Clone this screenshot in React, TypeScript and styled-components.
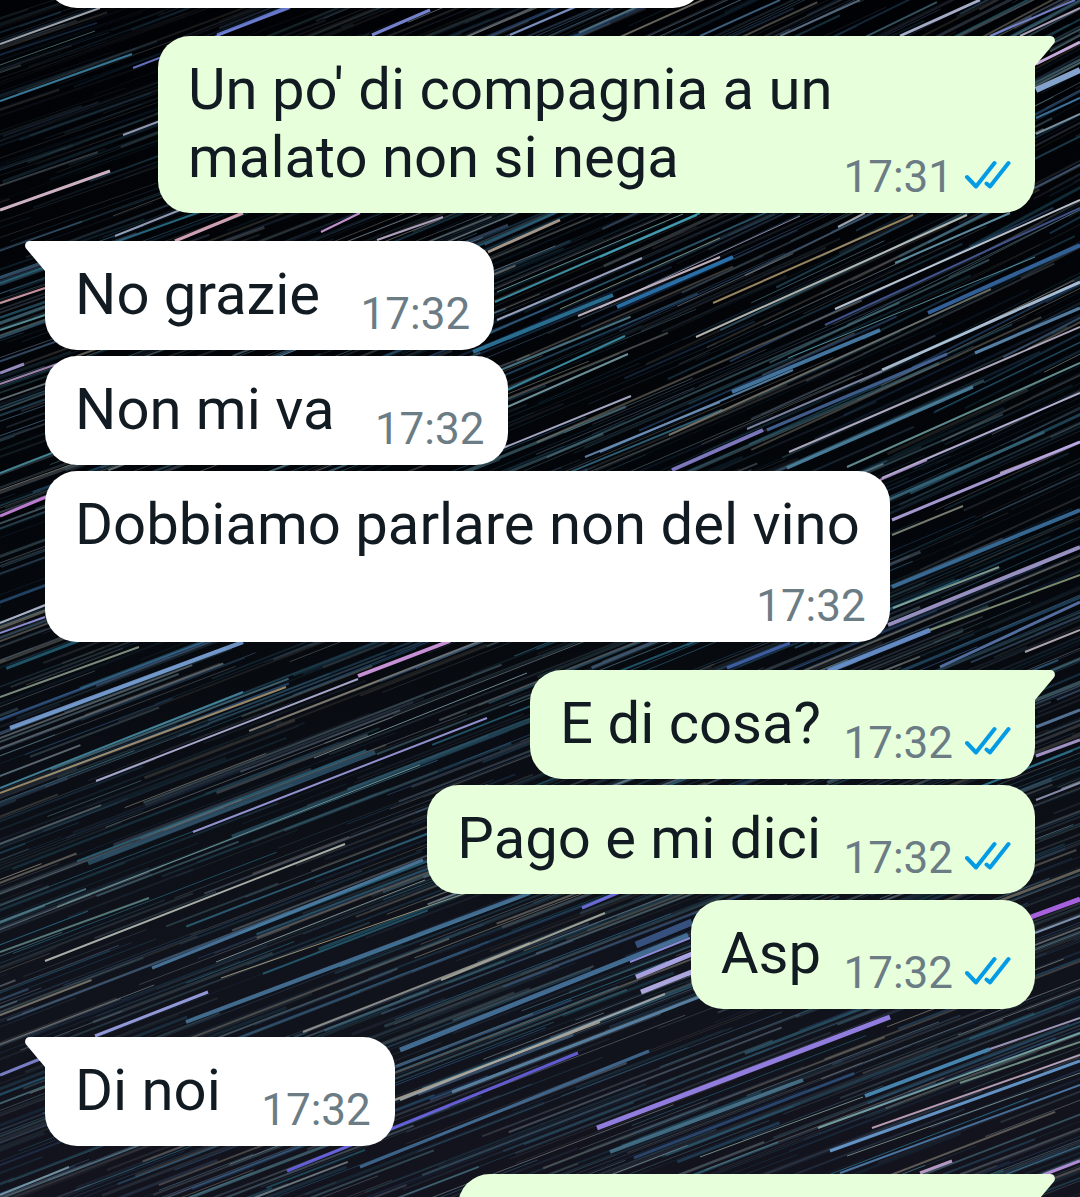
import React from "react";
import styled, { createGlobalStyle, css } from "styled-components";

const colors = {
  incoming: "#ffffff",
  outgoing: "#e7ffdb",
  text: "#111b21",
  meta: "#6b7c85",
  read: "#039be5",
};

const GlobalStyle = createGlobalStyle`
  *, *::before, *::after { box-sizing: border-box; }
  body {
    margin: 0;
    background: #05080d;
    font-family: Roboto, "Noto Sans", sans-serif;
  }
`;

type Side = "in" | "out";

const Screen = styled.main`
  position: relative;
  height: 100vh;
  overflow: hidden;
`;

const Wallpaper = styled.svg`
  position: absolute;
  inset: 0;
  width: 100%;
  height: 100%;
`;

const Thread = styled.div`
  position: relative;
  display: flex;
  flex-direction: column;
  gap: 28px;
  padding: 0 45px;
`;

const Group = styled.section<{ $side: Side }>`
  display: flex;
  flex-direction: column;
  align-items: ${(p) => (p.$side === "in" ? "flex-start" : "flex-end")};
  gap: 6px;
`;

const Bubble = styled.article<{ $side: Side; $tail?: boolean }>`
  position: relative;
  display: grid;
  max-width: calc(100% - 113px);
  padding: 19px 24px 10px 30px;
  border-radius: 32px;
  background: ${(p) => (p.$side === "in" ? colors.incoming : colors.outgoing)};
  ${(p) =>
    p.$tail &&
    (p.$side === "in"
      ? css`border-top-left-radius: 0;`
      : css`border-top-right-radius: 0;`)}
`;

const ClippedTop = styled(Bubble)`
  width: 660px;
  height: 8px;
  padding: 0;
  border-radius: 0;
  overflow: hidden;
  background: none;

  &::before {
    content: "";
    height: 80px;
    margin-top: -72px;
    border-radius: 32px;
    background: ${colors.incoming};
  }
`;

const ClippedBottom = styled(Bubble)`
  width: 577px;
  height: 109px;
`;

const TailShape = styled.svg<{ $side: Side }>`
  position: absolute;
  top: 0;
  ${(p) => (p.$side === "in" ? "left: -20px;" : "right: -20px;")}
  ${(p) => p.$side === "in" && "transform: scaleX(-1);"}
  width: 21px;
  height: 32px;
  fill: ${(p) => (p.$side === "in" ? colors.incoming : colors.outgoing)};
`;

const Text = styled.p<{ $stacked?: boolean }>`
  grid-area: 1 / 1;
  margin: 0 6px ${(p) => (p.$stacked ? 10 : 12)}px 0;
  color: ${colors.text};
  font-size: 58px;
  line-height: 68px;
`;

const MetaSpace = styled.span<{ $side: Side }>`
  display: inline-block;
  width: ${(p) => (p.$side === "in" ? 144 : 184)}px;
`;

const Meta = styled.div<{ $stacked?: boolean }>`
  grid-area: ${(p) => (p.$stacked ? "2 / 1" : "1 / 1")};
  ${(p) => p.$stacked && "margin-top: 12px;"}
  place-self: end;
  display: flex;
  align-items: center;
  gap: 12px;
  color: ${colors.meta};
  font-size: 44px;
  line-height: 52px;
`;

const Ticks = styled.svg`
  width: 46px;
  height: 30px;
  margin-bottom: 4px;
  fill: none;
  stroke: ${colors.read};
  stroke-width: 4;
  stroke-linecap: round;
  stroke-linejoin: round;
`;

function Tail({ side }: { side: Side }) {
  return (
    <TailShape $side={side} viewBox="0 0 21 32" aria-hidden="true">
      <path d="M0 0H16C20.500 0 22.500 4.500 19.500 8L1 30V32H0Z" />
    </TailShape>
  );
}

interface MessageProps {
  side: Side;
  time: string;
  tail?: boolean;
  stacked?: boolean;
  children: string;
}

function Message({ side, time, tail, stacked, children }: MessageProps) {
  return (
    <Bubble $side={side} $tail={tail}>
      {tail && <Tail side={side} />}
      <Text $stacked={stacked}>
        {children}
        {!stacked && <MetaSpace $side={side} />}
      </Text>
      <Meta $stacked={stacked}>
        <time>{time}</time>
        {side === "out" && (
          <Ticks viewBox="0 0 46 30" role="img" aria-label="Letto">
            <path d="M2 17L11 26.500L29.500 3M21.500 23.500L25 26.500L43.500 3" />
          </Ticks>
        )}
      </Meta>
    </Bubble>
  );
}

type Streak = [number, number, number, number, string, number];

const brightStreaks: Streak[] = [
  [0, 44, 100, 8, "#b8bcc4", 2], [0, 65, 95, 31, "#4f7070", 1], [0, 101, 132, 54, "#3f8ab0", 2],
  [133, 68, 290, 8, "#7484dc", 2], [217, 35, 290, 6, "#6f86e0", 3], [123, 135, 160, 121, "#a8b0d0", 2],
  [0, 210, 110, 171, "#f0cfe2", 3], [372, 35, 430, 10, "#8898ee", 3], [115, 236, 180, 210, "#a8b0cc", 2],
  [175, 241, 243, 213, "#f0b8cc", 3], [321, 232, 360, 213, "#e0a8ec", 2], [510, 35, 580, 5, "#88a0d8", 2],
  [900, 36, 980, 0, "#c0c8e8", 3], [990, 36, 1075, 0, "#8090e0", 2], [1020, 36, 1080, 8, "#c4b8d4", 2],
  [780, 36, 860, 0, "#607890", 2], [700, 36, 780, 0, "#406888", 2],
  [1036, 64, 1080, 42, "#e8c8ff", 3], [1036, 90, 1080, 70, "#9ac0f0", 6], [1036, 118, 1080, 98, "#4080b0", 2],
  [1036, 134, 1080, 114, "#8fa8b8", 2], [838, 227, 865, 213, "#b8c0c8", 2],
  [600, 257, 697, 215, "#4f98a8", 2], [617, 307, 733, 257, "#2f7fc0", 4], [600, 308, 800, 216, "#b0a0c0", 1],
  [713, 303, 913, 215, "#b09a70", 2], [696, 337, 967, 215, "#d0d0c8", 2], [835, 309, 1080, 200, "#d8e0e8", 2],
  [895, 263, 1010, 213, "#6aa0b8", 2], [825, 325, 1080, 208, "#4a5fa0", 2], [788, 358, 1035, 257, "#5fa0b0", 1],
  [732, 392, 880, 330, "#4f88b8", 4], [928, 313, 1080, 245, "#3a70b0", 4], [882, 370, 1080, 282, "#c0d8f0", 3],
  [747, 429, 882, 371, "#9098b8", 2], [767, 430, 947, 354, "#4a6aa0", 3], [672, 470, 763, 430, "#8f88d8", 4],
  [789, 452, 1080, 327, "#c8c0d8", 2], [975, 353, 1080, 308, "#6090b8", 3], [787, 468, 973, 387, "#5088a8", 3],
  [847, 467, 1080, 363, "#6fa0a0", 2], [882, 478, 1080, 393, "#d0c8f0", 2], [600, 452, 793, 370, "#5f90b8", 2],
  [1000, 473, 1080, 442, "#b8a0c0", 2],
  [488, 252, 560, 220, "#c0b0a0", 3], [578, 316, 720, 257, "#d8c8d8", 2], [560, 309, 720, 238, "#90a080", 1],
  [497, 320, 642, 258, "#b0b8d8", 2], [473, 352, 613, 295, "#2f80a8", 4], [507, 407, 628, 354, "#7fa8b0", 2],
  [503, 448, 631, 396, "#c0c0e0", 2], [585, 457, 720, 402, "#7090b8", 2], [377, 240, 443, 217, "#c8b8d8", 2],
  [497, 292, 683, 214, "#6fa0a0", 1], [495, 302, 700, 213, "#40a0b8", 2], [507, 390, 625, 336, "#4098b0", 2],
  [880, 480, 927, 460, "#b098d0", 2], [892, 520, 1080, 442, "#c0b0f0", 3], [892, 535, 963, 506, "#8a9080", 2],
  [892, 587, 1080, 510, "#3f78a8", 4], [888, 625, 1080, 547, "#b0a8e0", 4], [893, 608, 999, 567, "#90b0a0", 2],
  [828, 671, 930, 630, "#6f98d8", 5], [940, 667, 1080, 602, "#5f80b8", 3], [930, 630, 1080, 575, "#90a080", 2],
  [1025, 652, 1080, 630, "#c8c0c8", 2], [727, 668, 790, 643, "#4868b8", 3],
  [0, 516, 46, 497, "#d890f0", 3], [0, 473, 52, 453, "#4f98a8", 2], [0, 623, 45, 605, "#c0c0d8", 2],
  [0, 633, 45, 617, "#a0a0f0", 2], [0, 303, 45, 288, "#e8a8b8", 2], [0, 330, 45, 315, "#60a0a8", 2],
  [0, 373, 24, 364, "#a8a0d8", 3], [0, 384, 60, 363, "#b898c8", 2],
  [10, 728, 243, 642, "#7fa8e0", 4], [0, 697, 139, 647, "#8fa090", 2], [0, 793, 286, 687, "#b09a70", 2],
  [96, 781, 358, 679, "#c0c0e8", 2], [358, 676, 450, 641, "#e8a8f8", 4], [193, 832, 487, 718, "#a8a8f0", 2],
  [314, 758, 527, 673, "#7fa0a8", 1], [57, 907, 420, 765, "#7f9f98", 1], [45, 961, 345, 844, "#c0c8c0", 2],
  [0, 788, 243, 692, "#4a90a8", 2], [152, 968, 423, 860, "#4f80a8", 3], [216, 962, 425, 880, "#90a0a0", 1],
  [221, 978, 475, 890, "#b0a080", 1], [95, 1036, 208, 992, "#a8b0f8", 3], [186, 1022, 530, 893, "#4a7aa0", 4],
  [303, 1032, 530, 943, "#a0a098", 2], [0, 952, 149, 898, "#608888", 2], [88, 863, 375, 752, "#2c5068", 5],
  [400, 1050, 688, 935, "#4a7aa5", 5], [630, 962, 690, 938, "#a0a0f8", 2], [636, 977, 692, 954, "#c0b8ff", 5],
  [641, 992, 694, 971, "#c8c0ff", 5], [636, 945, 692, 922, "#3e5c90", 7], [441, 980, 605, 913, "#b0b0a0", 2],
  [400, 1100, 665, 994, "#b0b0b0", 2], [452, 1092, 699, 997, "#6088a8", 3], [287, 1171, 578, 1053, "#7068f0", 3],
  [360, 1167, 649, 1051, "#44709a", 3], [597, 1128, 890, 1017, "#a890ff", 5], [610, 1152, 803, 1080, "#4a7890", 4],
  [1031, 917, 1080, 899, "#c070ff", 5], [1035, 933, 1080, 916, "#90a8c8", 2], [582, 908, 620, 892, "#7878f0", 3],
  [865, 1096, 990, 1049, "#5098c8", 4], [990, 1049, 1080, 1018, "#b0a8d0", 2], [818, 1128, 1080, 1033, "#7fb0b0", 2],
  [872, 1128, 1080, 1055, "#d0b0c8", 2], [830, 1151, 1080, 1061, "#70a8e0", 3], [847, 1156, 1080, 1073, "#809890", 1],
  [840, 1173, 1080, 1085, "#5080b0", 2], [920, 1173, 952, 1161, "#d0b0e0", 3], [1043, 1175, 1080, 1161, "#c8a0f0", 3],
  [960, 1083, 1080, 1042, "#7f9f90", 2], [700, 1157, 863, 1097, "#80a098", 1], [0, 1075, 40, 1059, "#8890e0", 3],
  [394, 1100, 600, 1022, "#b0a898", 2], [0, 1195, 69, 1167, "#7f9fa8", 2],
  [1036, 756, 1080, 740, "#b8a8e0", 3], [1036, 727, 1080, 710, "#6080a8", 3], [1036, 800, 1080, 783, "#98a0c0", 2],
];

const faintPalette = ["#35708a", "#2a7088", "#52808f", "#668490", "#345c90", "#7f8c94", "#3f5876", "#4c5868", "#8a8578", "#295878"];

// Star trails bend slightly: steeper towards the upper right of the sky.
function slopeAt(x: number, y: number) {
  const t = Math.min(1, Math.max(0, (y - 200) / 600));
  return ((19 + x * 0.008) * (1 - t) + 21 * t) * (Math.PI / 180);
}

function createFaintStreaks(count: number): (Streak | [...Streak, number])[] {
  let seed = 7321;
  const random = () => {
    seed = (seed * 1664525 + 1013904223) % 4294967296;
    return seed / 4294967296;
  };
  return Array.from({ length: count }, () => {
    const x = random() * 1280 - 100;
    const y = random() * 1320 - 60;
    const half = 50 + random() * 150;
    const angle = slopeAt(x, y);
    const dx = Math.cos(angle) * half;
    const dy = Math.sin(angle) * half;
    const color = faintPalette[Math.floor(random() * faintPalette.length)];
    const width = random() > 0.92 ? 3 : random() > 0.5 ? 2 : 1;
    const dim = x < 450 && y < 220 ? 0.5 : 1;
    const opacity = (0.15 + random() * random() * 0.8) * dim;
    return [x - dx, y + dy, x + dx, y - dy, color, width, opacity];
  });
}

const faintStreaks = createFaintStreaks(1900);

function StarTrails() {
  return (
    <Wallpaper viewBox="0 0 1080 1197" preserveAspectRatio="xMidYMid slice" aria-hidden="true">
      <defs>
        <linearGradient id="sky" x1="0" y1="0" x2="0" y2="1">
          <stop offset="0" stopColor="#010205" />
          <stop offset="0.45" stopColor="#03060a" />
          <stop offset="0.8" stopColor="#10131b" />
          <stop offset="1" stopColor="#13131d" />
        </linearGradient>
      </defs>
      <rect width="1080" height="1197" fill="url(#sky)" />
      {[...faintStreaks, ...brightStreaks].map(([x1, y1, x2, y2, stroke, width, opacity = 0.85], i) => (
        <line key={i} x1={x1} y1={y1} x2={x2} y2={y2} stroke={stroke} strokeWidth={width} opacity={opacity} />
      ))}
    </Wallpaper>
  );
}

export default function App() {
  return (
    <Screen>
      <GlobalStyle />
      <StarTrails />
      <Thread>
        <Group $side="in">
          <ClippedTop $side="in" />
        </Group>
        <Group $side="out">
          <Message side="out" time="17:31" tail>
            Un po' di compagnia a un malato non si nega
          </Message>
        </Group>
        <Group $side="in">
          <Message side="in" time="17:32" tail>No grazie</Message>
          <Message side="in" time="17:32">Non mi va</Message>
          <Message side="in" time="17:32" stacked>Dobbiamo parlare non del vino</Message>
        </Group>
        <Group $side="out">
          <Message side="out" time="17:32" tail>E di cosa?</Message>
          <Message side="out" time="17:32">Pago e mi dici</Message>
          <Message side="out" time="17:32">Asp</Message>
        </Group>
        <Group $side="in">
          <Message side="in" time="17:32" tail>Di noi</Message>
        </Group>
        <Group $side="out">
          <ClippedBottom $side="out" $tail>
            <Tail side="out" />
          </ClippedBottom>
        </Group>
      </Thread>
    </Screen>
  );
}
